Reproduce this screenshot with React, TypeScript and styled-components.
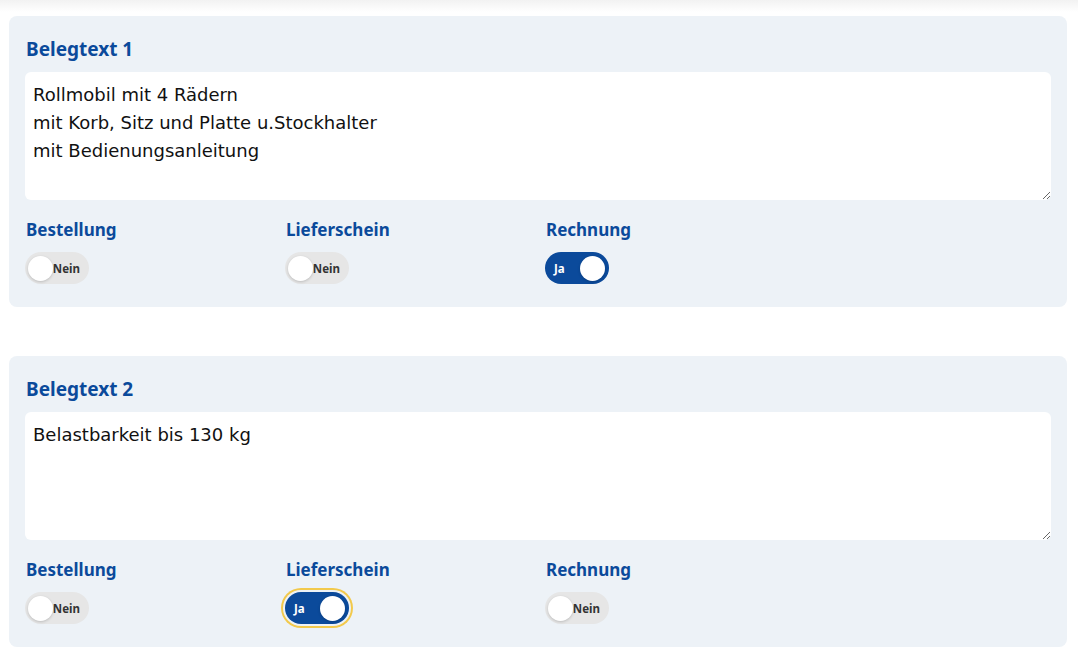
import { FC, useState } from 'react';
import styled, { createGlobalStyle } from 'styled-components';

const GlobalStyle = createGlobalStyle`
  html, body {
    margin: 0;
    padding: 0;
    background: #ffffff;
    font-family: 'Noto Sans', 'Open Sans', sans-serif;
  }
  * {
    box-sizing: border-box;
  }
`;

const BLUE = '#0b4a9b';

const CSSPage = styled.main`
  display: flex;
  flex-direction: column;
  gap: 49px;
  padding: 16px 11px 20px 9px;
  background: linear-gradient(to bottom, #f2f2f2 0, #ffffff 12px);
`;

const CSSCard = styled.section`
  background-color: #edf2f7;
  border-radius: 8px;
  padding: 21px 16px 23px;
`;

const CSSTitle = styled.h2`
  margin: 0 0 11px 1px;
  font-size: 19px;
  line-height: 24px;
  font-weight: 700;
  color: ${BLUE};
`;

const CSSTextArea = styled.textarea`
  display: block;
  width: 100%;
  height: 128px;
  padding: 9px 8px 7px;
  border: none;
  border-radius: 6px;
  background: #ffffff;
  font-family: 'DejaVu Sans', 'Noto Sans', sans-serif;
  font-size: 18px;
  line-height: 28px;
  color: #111111;
  resize: vertical;
  outline: none;
`;

const CSSOptions = styled.div`
  display: grid;
  grid-template-columns: repeat(3, 260px);
  margin-top: 20px;
`;

const CSSOption = styled.div`
  display: flex;
  flex-direction: column;
  align-items: flex-start;
  gap: 12px;
`;

const CSSLabel = styled.span`
  padding-left: 1px;
  font-size: 17px;
  line-height: 20px;
  font-weight: 700;
  color: ${BLUE};
`;

const CSSSwitch = styled.button<{ $on: boolean; $focused?: boolean }>`
  display: flex;
  align-items: center;
  flex-direction: ${({ $on }) => ($on ? 'row' : 'row-reverse')};
  justify-content: space-between;
  width: 64px;
  height: 32px;
  padding: ${({ $on }) => ($on ? '0 4px 0 9px' : '0 9px 0 3px')};
  border: none;
  border-radius: 16px;
  background-color: ${({ $on }) => ($on ? BLUE : '#e6e6e6')};
  box-shadow: ${({ $focused }) =>
    $focused ? '0 0 0 2px #edf2f7, 0 0 0 4px #f2c94c' : 'none'};
  font-family: inherit;
  cursor: pointer;
`;

const CSSSwitchText = styled.span<{ $on: boolean }>`
  font-size: 11.5px;
  font-weight: 700;
  color: ${({ $on }) => ($on ? '#ffffff' : '#333333')};
`;

const CSSKnob = styled.span`
  width: 25px;
  height: 25px;
  border-radius: 50%;
  background: #ffffff;
  box-shadow: 0 1px 3px rgba(0, 0, 0, 0.18);
`;

type Flags = { bestellung: boolean; lieferschein: boolean; rechnung: boolean };

const Toggle: FC<{ on: boolean; focused?: boolean; onClick: () => void }> = ({
  on,
  focused,
  onClick,
}) => (
  <CSSSwitch type="button" $on={on} $focused={focused} onClick={onClick}>
    <CSSSwitchText $on={on}>{on ? 'Ja' : 'Nein'}</CSSSwitchText>
    <CSSKnob />
  </CSSSwitch>
);

const BelegCard: FC<{
  title: string;
  text: string;
  initial: Flags;
  focusKey?: keyof Flags;
}> = ({ title, text, initial, focusKey }) => {
  const [flags, setFlags] = useState<Flags>(initial);
  const options: { key: keyof Flags; label: string }[] = [
    { key: 'bestellung', label: 'Bestellung' },
    { key: 'lieferschein', label: 'Lieferschein' },
    { key: 'rechnung', label: 'Rechnung' },
  ];
  return (
    <CSSCard>
      <CSSTitle>{title}</CSSTitle>
      <CSSTextArea defaultValue={text} />
      <CSSOptions>
        {options.map((o) => (
          <CSSOption key={o.key}>
            <CSSLabel>{o.label}</CSSLabel>
            <Toggle
              on={flags[o.key]}
              focused={focusKey === o.key}
              onClick={() => setFlags({ ...flags, [o.key]: !flags[o.key] })}
            />
          </CSSOption>
        ))}
      </CSSOptions>
    </CSSCard>
  );
};

const App: FC = () => {
  return (
    <>
      <GlobalStyle />
      <CSSPage>
        <BelegCard
          title="Belegtext 1"
          text={'Rollmobil mit 4 Rädern\nmit Korb, Sitz und Platte u.Stockhalter\nmit Bedienungsanleitung'}
          initial={{ bestellung: false, lieferschein: false, rechnung: true }}
        />
        <BelegCard
          title="Belegtext 2"
          text="Belastbarkeit bis 130 kg"
          initial={{ bestellung: false, lieferschein: true, rechnung: false }}
          focusKey="lieferschein"
        />
      </CSSPage>
    </>
  );
};

export default App;
